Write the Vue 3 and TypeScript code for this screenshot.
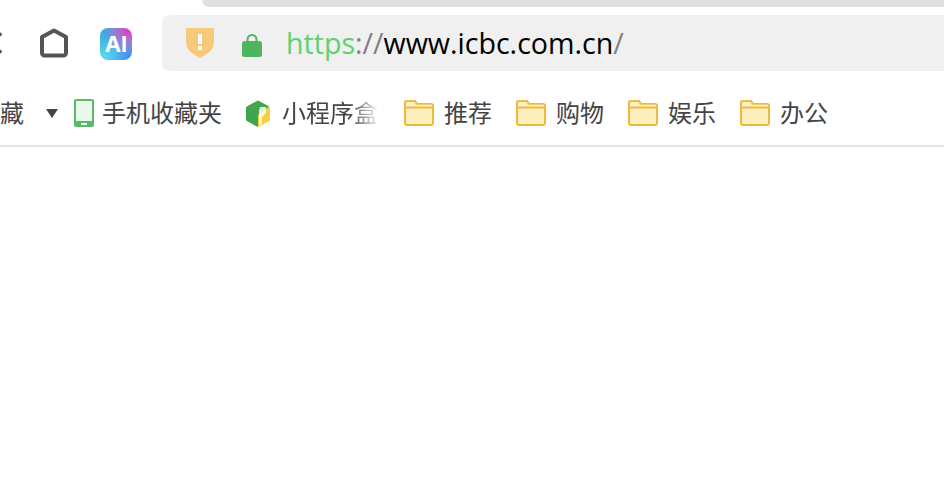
<template>
  <div class="browser">
    <div class="tab-strip"></div>

    <div class="toolbar">
      <div class="nav-buttons">
        <svg class="back-icon" width="4" height="28" viewBox="0 0 4 28">
          <path d="M-8 14 L2 4 M-8 14 L2 24" fill="none" stroke="#555" stroke-width="4" />
        </svg>
        <svg class="home-icon" width="32" height="32" viewBox="0 0 32 32">
          <path d="M16 3.500 L28 10 V26 a2.500 2.500 0 0 1 -2.500 2.500 H6.500 A2.500 2.500 0 0 1 4 26 V10 Z" fill="none" stroke="#555" stroke-width="4" stroke-linejoin="round" />
        </svg>
        <div class="ai-icon"><span>AI</span></div>
      </div>

      <div class="address-bar">
        <svg class="shield-icon" width="28" height="30" viewBox="0 0 28 30">
          <path d="M0 0 H28 V14 C28 22 20 27 14 30 C8 27 0 22 0 14 Z" fill="#f7c97a" />
          <rect x="12" y="6" width="4" height="10" fill="#fff" />
          <rect x="12" y="18" width="4" height="4" fill="#fff" />
        </svg>
        <svg class="lock-icon" width="20" height="24" viewBox="0 0 20 24">
          <path d="M5.500 9 V6.500 a4.500 4.500 0 0 1 9 0 V9" fill="none" stroke="#4fb45f" stroke-width="2" />
          <rect x="0" y="8" width="20" height="16" rx="2.500" fill="#4fb45f" />
        </svg>
        <div class="url">
          <span class="url-scheme">https</span><span class="url-sep">://</span><span class="url-host">www.icbc.com.cn</span><span class="url-sep">/</span>
        </div>
      </div>
    </div>

    <div class="bookmarks">
      <span class="bookmark-text clipped">藏</span>
      <span class="caret"></span>

      <div class="bookmark phone">
        <svg width="20" height="28" viewBox="0 0 20 28">
          <rect width="20" height="28" rx="2" fill="#5cb96c" />
          <rect x="2" y="2" width="16" height="20" fill="#eaf8ec" />
          <rect x="7" y="24" width="6" height="2" fill="#eaf8ec" />
        </svg>
        <span class="bookmark-text">手机收藏夹</span>
      </div>

      <div class="bookmark miniapp">
        <svg width="24" height="27" viewBox="0 0 24 27">
          <path d="M12 0.500 L23 6.500 Q24 7 24 8 V19.500 Q24 20.500 23 21 L12 27 L1 21 Q0 20.500 0 19.500 V8 Q0 7 1 6.500 Z" fill="#f6d03f" />
          <path d="M12 0.500 L23 6.500 L12 15 V27 L1 21 Q0 20.500 0 19.500 V8 Q0 7 1 6.500 Z" fill="#3fa64d" />
          <path d="M14 7 H20 V13 L16 17 V24 L13 25 V11 Z" fill="#fff" opacity="0.800" />
          <path d="M16 17 L24 12 V20 L16 25 Z" fill="#f6d03f" />
        </svg>
        <span class="bookmark-text faded">小程序盒</span>
      </div>

      <div v-for="name in folders" :key="name" class="bookmark folder">
        <svg width="30" height="26" viewBox="0 0 30 26">
          <path d="M1 3 a2 2 0 0 1 2 -2 H11 L13 4 H27 a2 2 0 0 1 2 2 V23 a2 2 0 0 1 -2 2 H3 a2 2 0 0 1 -2 -2 Z" fill="#fcefbe" stroke="#eeb93e" stroke-width="2" />
          <path d="M2 5.500 H28" stroke="#fdf6d6" stroke-width="1.500" />
          <path d="M1 7.500 H29" stroke="#eeb93e" stroke-width="2" />
        </svg>
        <span class="bookmark-text">{{ name }}</span>
      </div>
    </div>
  </div>
</template>

<script setup lang="ts">
const folders: string[] = ['推荐', '购物', '娱乐', '办公'];
</script>

<style>
html,
body {
  margin: 0;
  background: #fff;
  overflow: hidden;
}
</style>

<style scoped>
.browser {
  width: 944px;
  height: 482px;
  overflow: hidden;
  background: #fff;
  font-family: "Noto Sans CJK SC", "Noto Sans", sans-serif;
}

.tab-strip {
  height: 7px;
  margin-left: 202px;
  background: #e0e0e0;
  border-bottom-left-radius: 10px;
}

.toolbar {
  display: flex;
  height: 56px;
  margin-top: 8px;
}

.nav-buttons {
  display: flex;
  align-items: center;
  width: 162px;
  flex-shrink: 0;
}

.back-icon {
  margin-left: -1px;
  margin-top: -1px;
  overflow: visible;
}

.home-icon {
  margin-left: 35px;
  margin-top: -1px;
}

.ai-icon {
  width: 32px;
  height: 32px;
  margin-left: 30px;
  margin-top: 1px;
  border-radius: 8px;
  display: flex;
  align-items: center;
  justify-content: center;
  background:
    radial-gradient(circle at 85% 10%, #d93fc0 0, rgba(217, 63, 192, 0) 60%),
    radial-gradient(circle at 15% 15%, #3aa6e6 0, rgba(58, 166, 230, 0) 60%),
    radial-gradient(circle at 90% 90%, #3f8ff0 0, rgba(63, 143, 240, 0) 55%),
    #5bd6e8;
}

.ai-icon span {
  color: #fff;
  font-family: "Inter", "Noto Sans", sans-serif;
  font-size: 22px;
  font-weight: 700;
  line-height: 1;
}

.address-bar {
  flex: 1;
  display: flex;
  align-items: center;
  background: #f0f0f0;
  border-radius: 8px 0 0 8px;
}

.shield-icon {
  margin-left: 24px;
}

.lock-icon {
  margin-left: 28px;
  margin-top: 3px;
}

.url {
  margin-left: 24px;
  font-family: "Open Sans", "Noto Sans", sans-serif;
  font-size: 28.600px;
  line-height: 56px;
  white-space: nowrap;
  color: #000;
}

.url-scheme {
  color: #5ed16f;
}

.url-sep {
  color: #808080;
}

.bookmarks {
  display: flex;
  align-items: center;
  height: 64px;
  padding-top: 10px;
  border-bottom: 2px solid #e4e4e4;
  white-space: nowrap;
}

.bookmark {
  display: flex;
  align-items: center;
  flex-shrink: 0;
}

.bookmark-text {
  font-size: 24px;
  line-height: 32px;
  margin-top: -2px;
  color: #444;
}

.caret {
  width: 0;
  height: 0;
  margin-left: 22px;
  border-left: 6px solid transparent;
  border-right: 6px solid transparent;
  border-top: 9px solid #444;
}

.phone {
  margin-left: 16px;
  gap: 8px;
}

.miniapp {
  margin-left: 24px;
  gap: 12px;
}

.faded {
  mask-image: linear-gradient(to right, #000 70%, rgba(0, 0, 0, 0.05) 100%);
  -webkit-mask-image: linear-gradient(to right, #000 70%, rgba(0, 0, 0, 0.05) 100%);
}

.folder {
  margin-left: 26px;
  gap: 10px;
}

.folder ~ .folder {
  margin-left: 24px;
}
</style>
